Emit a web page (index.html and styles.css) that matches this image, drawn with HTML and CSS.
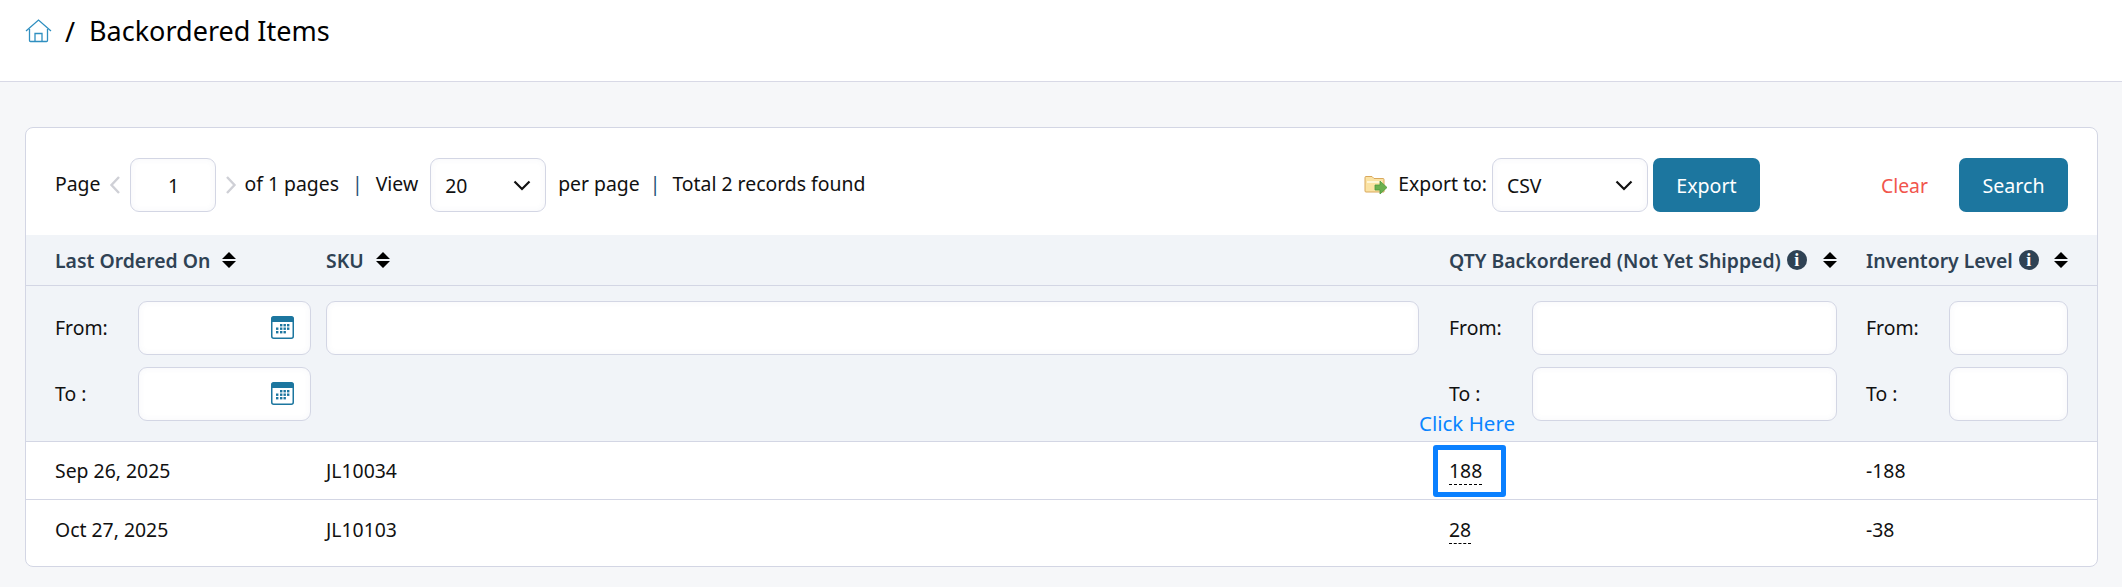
FILE: index.html
```html
<!DOCTYPE html>
<html lang="en">
<head>
<meta charset="utf-8">
<title>Backordered Items</title>
<link rel="stylesheet" href="styles.css">
</head>
<body>
<header class="topbar">
  <svg class="home" width="27" height="24" viewBox="0 0 27 24" fill="none" stroke="#2f8fc0" stroke-width="1.3">
    <path d="M1 12 13.5 1 26 12"/>
    <path d="M4.5 10v11.5q0 1 1 1h16q1 0 1-1V10"/>
    <path d="M10 22.5v-8h7v8"/>
  </svg>
  <span class="slash">/</span>
  <h1 class="title">Backordered Items</h1>
</header>
<main class="content">
  <section class="card">
    <div class="toolbar">
      <div class="tool-group">
        <span>Page</span>
        <svg class="chev chev-prev" width="12" height="20" viewBox="0 0 12 20" fill="none" stroke="#cfd0d6" stroke-width="2.4"><path d="M10 2 2.500 10 10 18"/></svg>
        <input class="field page-input" type="text" value="1">
        <svg class="chev chev-next" width="12" height="20" viewBox="0 0 12 20" fill="none" stroke="#cfd0d6" stroke-width="2.4"><path d="M2 2 9.500 10 2 18"/></svg>
        <span>of 1 pages</span>
        <span class="sep">|</span>
        <span class="view">View</span>
        <div class="select-wrap view-select">
          <select class="field select"><option>20</option></select>
          <svg class="select-arrow" width="18" height="11" viewBox="0 0 18 11" fill="none" stroke="#111" stroke-width="2.2"><path d="M1.500 1.500 9 9l7.500-7.500"/></svg>
        </div>
        <span class="per">per page</span>
        <span class="sep sep-tight">|</span>
        <span class="total">Total 2 records found</span>
      </div>
      <div class="tool-group export-group">
        <svg class="export-icon" width="24" height="24" viewBox="0 0 24 24">
          <path d="M1 4.500q0-1 1-1h6l2 2h9q1 0 1 1V19H2q-1 0-1-1z" fill="#fbe3a4" stroke="#d9a85c"/>
          <path d="M3 8h15v2H3z" fill="#fff6d8"/>
          <path d="M11 12h5V8l7 6.500-7 6.500v-4h-5z" fill="#6bb04f" stroke="#4d9a3c" stroke-width=".8"/>
        </svg>
        <span class="export-label">Export to:</span>
        <div class="select-wrap export-select">
          <select class="field select"><option>CSV</option></select>
          <svg class="select-arrow" width="18" height="11" viewBox="0 0 18 11" fill="none" stroke="#111" stroke-width="2.2"><path d="M1.500 1.500 9 9l7.500-7.500"/></svg>
        </div>
        <button class="btn export-btn" type="button">Export</button>
      </div>
      <div class="tool-group action-group">
        <a class="clear" href="#">Clear</a>
        <button class="btn search-btn" type="button">Search</button>
      </div>
    </div>

    <div class="row head-row">
      <div class="th">Last Ordered On<svg class="sort" width="14" height="16" viewBox="0 0 14 16"><path d="M7 0 14 7H0zM0 9h14L7 16z"/></svg></div>
      <div class="th">SKU<svg class="sort" width="14" height="16" viewBox="0 0 14 16"><path d="M7 0 14 7H0zM0 9h14L7 16z"/></svg></div>
      <div class="th th-qty">QTY Backordered (Not Yet Shipped)<span class="info">i</span><svg class="sort sort-wide" width="14" height="16" viewBox="0 0 14 16"><path d="M7 0 14 7H0zM0 9h14L7 16z"/></svg></div>
      <div class="th">Inventory Level<span class="info">i</span><svg class="sort sort-wide" width="14" height="16" viewBox="0 0 14 16"><path d="M7 0 14 7H0zM0 9h14L7 16z"/></svg></div>
    </div>

    <div class="row filter-row">
      <div class="filter-cell col-date">
        <label class="range"><span class="range-label">From:</span><span class="date-wrap"><input class="field range-input" type="text">
          <svg class="cal" width="23" height="23" viewBox="0 0 23 23"><rect x=".75" y=".75" width="21.500" height="21.500" rx="2" fill="#fff" stroke="#1c769f" stroke-width="1.500"/><path d="M.5 6V2.500q0-2 2-2h18q2 0 2 2V6z" fill="#1c769f"/><g fill="#1c769f"><rect x="9" y="8" width="2.400" height="2.400"/><rect x="12.500" y="8" width="2.400" height="2.400"/><rect x="16" y="8" width="2.400" height="2.400"/><rect x="5" y="11.500" width="2.400" height="2.400"/><rect x="9" y="11.500" width="2.400" height="2.400"/><rect x="12.500" y="11.500" width="2.400" height="2.400"/><rect x="16" y="11.500" width="2.400" height="2.400"/><rect x="5" y="15" width="2.400" height="2.400"/><rect x="9" y="15" width="2.400" height="2.400"/><rect x="12.500" y="15" width="2.400" height="2.400"/></g></svg></span></label>
        <label class="range"><span class="range-label">To :</span><span class="date-wrap"><input class="field range-input" type="text">
          <svg class="cal" width="23" height="23" viewBox="0 0 23 23"><rect x=".75" y=".75" width="21.500" height="21.500" rx="2" fill="#fff" stroke="#1c769f" stroke-width="1.500"/><path d="M.5 6V2.500q0-2 2-2h18q2 0 2 2V6z" fill="#1c769f"/><g fill="#1c769f"><rect x="9" y="8" width="2.400" height="2.400"/><rect x="12.500" y="8" width="2.400" height="2.400"/><rect x="16" y="8" width="2.400" height="2.400"/><rect x="5" y="11.500" width="2.400" height="2.400"/><rect x="9" y="11.500" width="2.400" height="2.400"/><rect x="12.500" y="11.500" width="2.400" height="2.400"/><rect x="16" y="11.500" width="2.400" height="2.400"/><rect x="5" y="15" width="2.400" height="2.400"/><rect x="9" y="15" width="2.400" height="2.400"/><rect x="12.500" y="15" width="2.400" height="2.400"/></g></svg></span></label>
      </div>
      <div class="filter-cell col-sku"><input class="field range-input" type="text"></div>
      <div class="filter-cell col-qty">
        <label class="range"><span class="range-label">From:</span><input class="field range-input" type="text"></label>
        <label class="range"><span class="range-label">To :</span><input class="field range-input" type="text"></label>
      </div>
      <div class="filter-cell">
        <label class="range"><span class="range-label">From:</span><input class="field range-input" type="text"></label>
        <label class="range"><span class="range-label">To :</span><input class="field range-input" type="text"></label>
      </div>
    </div>

    <div class="row data-row">
      <div>Sep 26, 2025</div>
      <div>JL10034</div>
      <div class="qty-cell">
        <span class="click-here">Click Here</span>
        <span class="highlight"></span>
        <span class="qty">188</span>
      </div>
      <div>-188</div>
    </div>
    <div class="row data-row last-row">
      <div>Oct 27, 2025</div>
      <div>JL10103</div>
      <div><span class="qty">28</span></div>
      <div>-38</div>
    </div>
  </section>
</main>
</body>
</html>
```
FILE: styles.css
```css
* { box-sizing: border-box; }

html, body { margin: 0; height: 100%; }

body {
  background: #f6f7f9;
  color: #111;
  font-family: "Noto Sans", sans-serif;
  font-size: 19.4px;
  overflow: hidden;
}

.topbar {
  height: 82px;
  background: #fff;
  border-bottom: 1px solid #d8d9e6;
  display: flex;
  align-items: flex-start;
  padding: 19px 0 0 25px;
}

.home { flex: none; }

.slash {
  font-size: 27px;
  line-height: 26px;
  margin-left: 13px;
  color: #000;
}

.title {
  margin: -1px 0 0 14px;
  font-size: 27px;
  line-height: 26px;
  font-weight: 400;
  color: #000;
}

.content { padding: 45px 24px 0 25px; }

.card {
  background: #fff;
  border: 1px solid #d3d6e4;
  border-radius: 8px;
  overflow: hidden;
}

.toolbar {
  height: 107px;
  padding: 30px 29px 0 29px;
  display: flex;
  align-items: flex-start;
}

.tool-group {
  display: flex;
  align-items: center;
  height: 54px;
}

.tool-group > span { position: relative; top: -2px; }

.chev { flex: none; }
.chev-prev { margin: 0 9px 0 9px; }
.chev-next { margin: 0 7px 0 9px; }

.field {
  background: #fff;
  border: 1px solid #d3d6e4;
  border-radius: 9px;
  box-shadow: inset 0 0 6px rgba(90, 100, 150, 0.06);
  font: inherit;
  color: #111;
  height: 54px;
  outline: none;
}

.page-input { width: 86px; text-align: center; }

.sep { margin: 0 13px; color: #1c4f75; }
.sep-tight { margin: 0 12px 0 10px; }
.view { margin-right: 12px; }

.select-wrap { position: relative; height: 54px; }

.select {
  appearance: none;
  width: 100%;
  padding: 0 0 0 14px;
}

.select-arrow {
  position: absolute;
  right: 15px;
  top: 22px;
  pointer-events: none;
}

.view-select { width: 116px; }
.per { margin-left: 12px; }

.export-group { margin-left: auto; }
.export-icon { margin-right: 10px; }
.export-label { margin-right: 5px; }
.export-select { width: 156px; }

.btn {
  height: 54px;
  border: 0;
  border-radius: 7px;
  background: #1c769f;
  color: #fff;
  font: inherit;
  font-size: 19.6px;
}

.export-btn { width: 107px; margin-left: 5px; }

.action-group { margin-left: 121px; }

.clear {
  color: #f1554c;
  font-size: 19.4px;
  text-decoration: none;
  margin-right: 31px;
}

.search-btn { width: 109px; }

.row {
  display: grid;
  grid-template-columns: 271px 1123px 417px 1fr;
  padding: 0 29px;
}

.head-row {
  height: 51px;
  background: #f1f4f8;
  border-bottom: 1px solid #d3d6e4;
  align-items: center;
}

.th {
  display: flex;
  align-items: center;
  font-weight: 600;
  color: #2f4254;
  white-space: nowrap;
}

.sort { flex: none; margin-left: 12px; fill: #000; }
.sort-wide { margin-left: auto; }

.info {
  flex: none;
  width: 20px;
  height: 20px;
  margin-left: 6px;
  border-radius: 50%;
  background: #2f4254;
  color: #fff;
  font-family: "Liberation Serif", serif;
  font-size: 18px;
  font-weight: 700;
  line-height: 20px;
  text-align: center;
}

.th-qty { padding-right: 29px; }

.filter-row {
  height: 156px;
  background: #f1f4f8;
  border-bottom: 1px solid #d3d6e4;
  padding-top: 15px;
}

.filter-cell {
  display: flex;
  flex-direction: column;
  gap: 12px;
}

.col-date { padding-right: 15px; }
.col-sku { padding-right: 30px; }
.col-qty { padding-right: 29px; }

.range { display: flex; align-items: center; }

.range-label { flex: none; width: 83px; position: relative; top: -1px; }

.range-input { width: 100%; min-width: 0; }

.date-wrap { position: relative; flex: 1; min-width: 0; display: block; height: 54px; }

.cal { position: absolute; right: 17px; top: 15px; }

.data-row {
  height: 58px;
  align-items: center;
  border-bottom: 1px solid #d3d6e4;
}

.last-row { height: 66px; border-bottom: 0; padding-bottom: 8px; }

.qty { border-bottom: 1px dashed #000; position: relative; }

.qty-cell { position: relative; }

.click-here {
  position: absolute;
  left: -30px;
  top: -46px;
  font-size: 20.5px;
  line-height: 24px;
  color: #0a84ff;
  white-space: nowrap;
}

.highlight {
  position: absolute;
  left: -16px;
  top: -12px;
  width: 73px;
  height: 52px;
  border: 5px solid #0a80ff;
  border-radius: 3px;
}
```
